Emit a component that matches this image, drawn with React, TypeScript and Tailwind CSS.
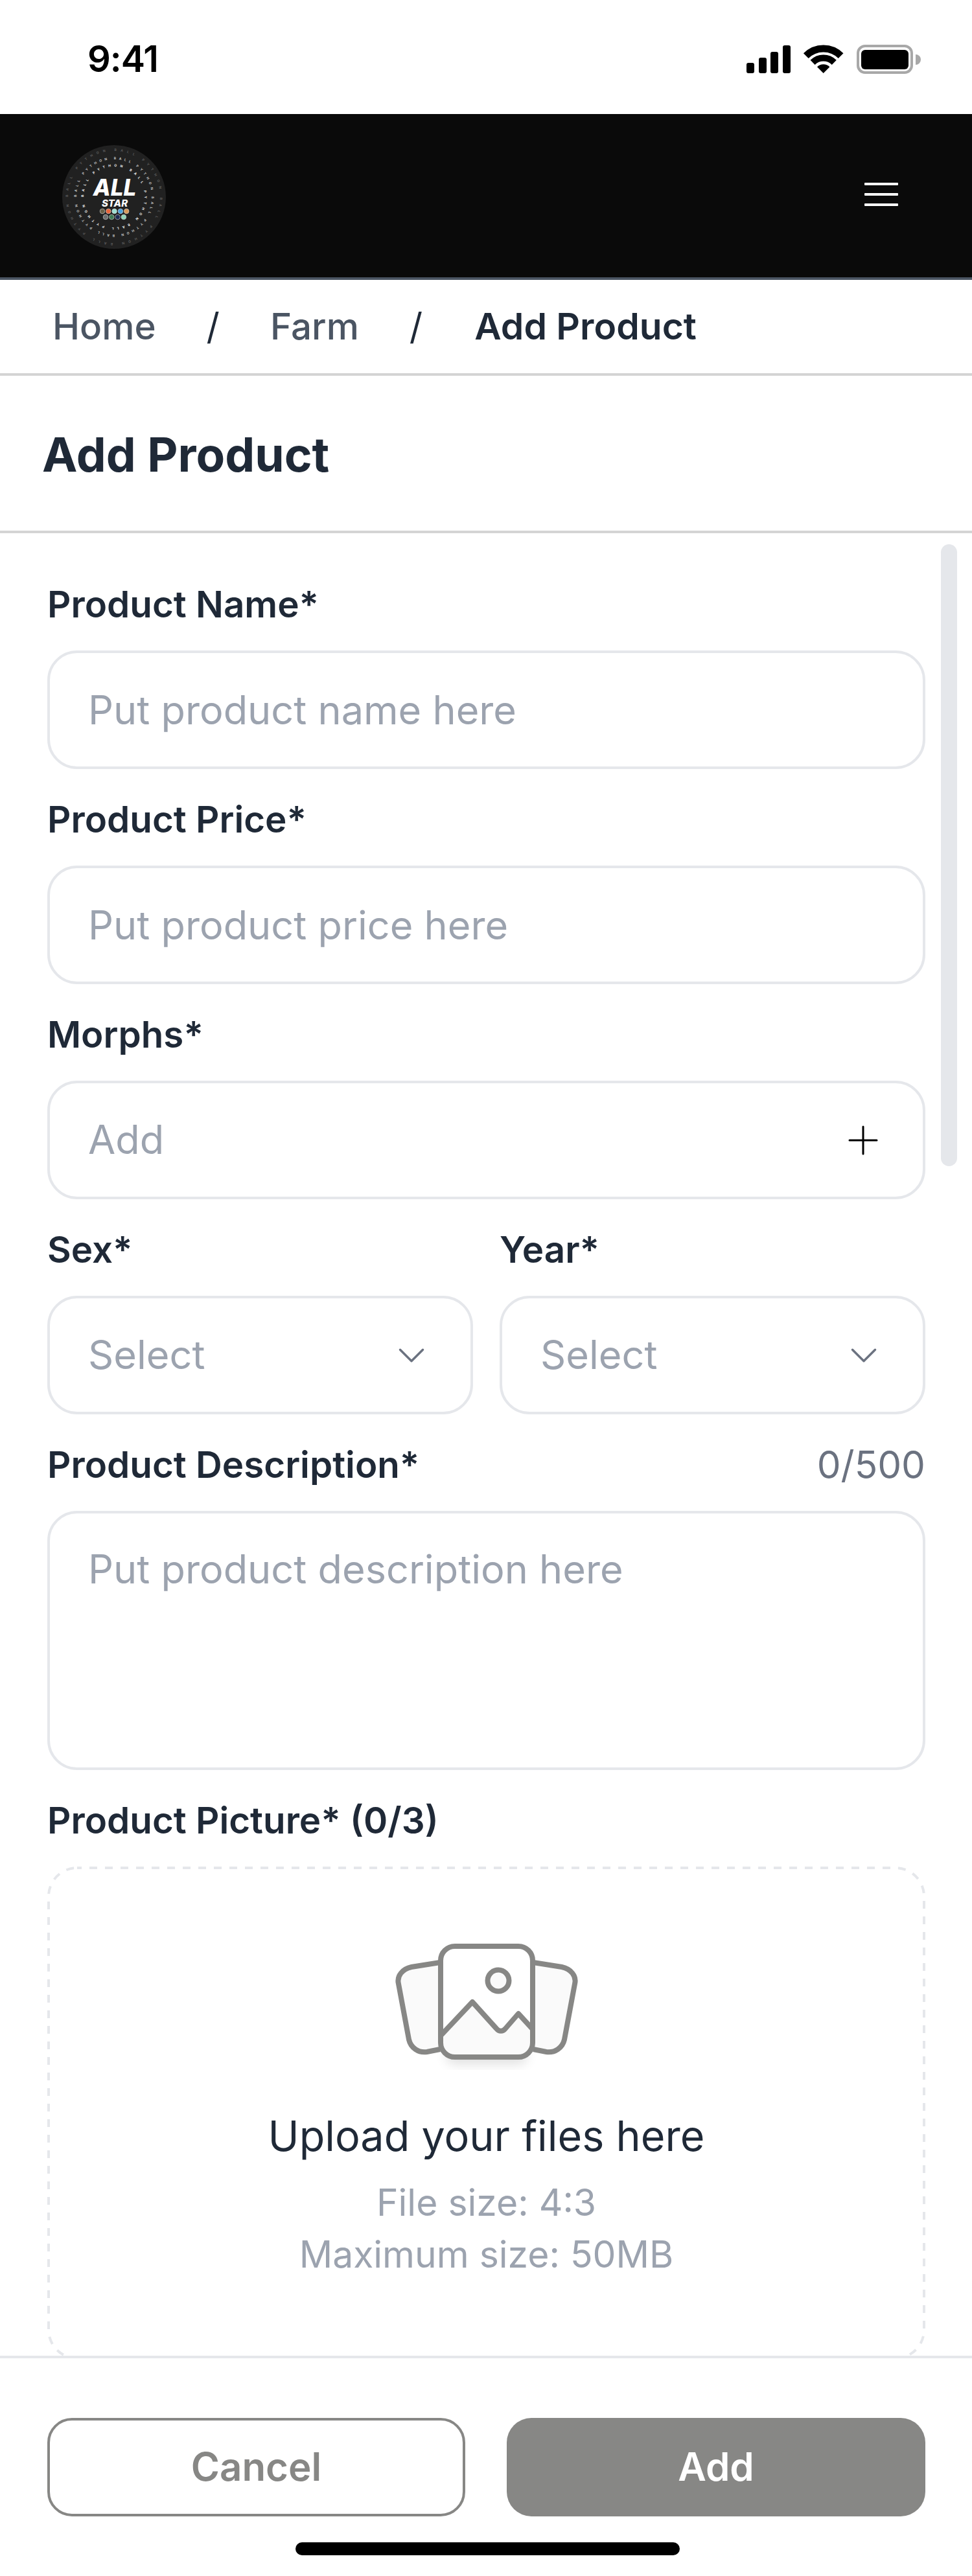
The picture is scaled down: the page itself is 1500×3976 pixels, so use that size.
import { ChevronDown, Plus } from "lucide-react";

const labelClass = "h-[77px] mb-[33px] text-[56.5px] leading-[77px] font-semibold text-[#1f2937] whitespace-nowrap";
const inputClass =
  "block w-full h-[183px] px-[59px] border-4 border-[#e5e7eb] rounded-[46px] bg-white text-[61.2px] outline-none placeholder:text-[#9ca3af]";
const boxClass =
  "flex items-center justify-between h-[183px] pl-[59px] pr-[56px] border-4 border-[#e5e7eb] rounded-[46px] bg-white text-[61.2px] text-[#9ca3af]";

function StatusIcons() {
  return (
    <svg width="340" height="100" viewBox="0 0 340 100" className="mt-1 mr-[60px]">
      <rect x="52" y="57" width="12" height="16" rx="3" fill="#000" />
      <rect x="71" y="49" width="12" height="24" rx="3" fill="#000" />
      <rect x="89" y="40" width="12" height="33" rx="3" fill="#000" />
      <rect x="108" y="30" width="12" height="43" rx="3" fill="#000" />
      <path d="M143.8 46.1A38 38 0 0 1 197.6 46.1" fill="none" stroke="#000" strokeWidth="11" />
      <path d="M154.1 56.4A23.5 23.5 0 0 1 187.3 56.4" fill="none" stroke="#000" strokeWidth="10" />
      <path d="M170.7 73L161 63.3A13.7 13.7 0 0 1 180.4 63.3Z" fill="#000" />
      <rect x="224" y="31" width="83" height="41" rx="11" fill="none" stroke="#a8a8a8" strokeWidth="4" />
      <rect x="229" y="37" width="73" height="30" rx="6" fill="#000" />
      <path d="M313 44A8 8 0 0 1 313 60Z" fill="#a8a8a8" />
    </svg>
  );
}

function Ring({ id, r, color, size, repeat }: { id: string; r: number; color: string; size: number; repeat: number }) {
  const text = Array(repeat).fill("BALL PYTHON").join("      ");
  return (
    <>
      <path id={id} d={`M${80 - r} 80A${r} ${r} 0 1 1 ${80 + r} 80A${r} ${r} 0 1 1 ${80 - r} 80`} fill="none" />
      <text fontSize={size} fill={color} fontWeight="700" fontFamily="Inter, sans-serif">
        <textPath href={`#${id}`} textLength={2 * Math.PI * r - 12}>
          {text}
        </textPath>
      </text>
    </>
  );
}

function Logo() {
  const dotsTop = ["#6b6148", "#e8663c", "#9fe0d4", "#4aa3df", "#d99a5b"];
  const dotsBottom = ["#6d6d6d", "#3f7a55", "#1c2a52", "#8fd3b8"];
  return (
    <svg width="160" height="160" viewBox="0 0 160 160" className="mt-1">
      <circle cx="80" cy="80" r="80" fill="#212121" />
      <Ring id="ring-outer" r={71} color="#5c5c5c" size={5} repeat={4} />
      <Ring id="ring-mid" r={58} color="#c4c4c4" size={5} repeat={4} />
      <Ring id="ring-inner" r={47} color="#f2f2f2" size={5} repeat={3} />
      <text x="81" y="78" textAnchor="middle" fontSize="35" fontWeight="800" fontStyle="italic" fill="#fff" fontFamily="Inter, sans-serif">
        ALL
      </text>
      <text x="81" y="95" textAnchor="middle" fontSize="15" fontWeight="800" fontStyle="italic" fill="#fff" fontFamily="Inter, sans-serif">
        STAR
      </text>
      {dotsTop.map((c, i) => (
        <circle key={c} cx={62 + i * 9.3} cy="102" r="3.8" fill={c} stroke="#ddd" strokeWidth="0.6" />
      ))}
      {dotsBottom.map((c, i) => (
        <circle key={c} cx={67 + i * 9.3} cy="111" r="3.8" fill={c} stroke="#ddd" strokeWidth="0.6" />
      ))}
    </svg>
  );
}

function UploadIcon() {
  return (
    <svg width="380" height="250" viewBox="0 0 380 250" className="mx-auto">
      <defs>
        <filter id="soft" x="-30%" y="-30%" width="160%" height="160%">
          <feGaussianBlur stdDeviation="9" />
        </filter>
      </defs>
      <path
        d="M118 69L74 76C60 79 51 90 54 102L70 188C73 201 85 209 98 207L118 203"
        fill="#fafafa"
        stroke="#878785"
        strokeWidth="8"
      />
      <path
        d="M262 69L306 76C320 79 329 90 326 102L310 188C307 201 295 209 282 207L262 203"
        fill="#fafafa"
        stroke="#878785"
        strokeWidth="8"
      />
      <rect x="128" y="196" width="124" height="30" rx="12" fill="#000" opacity="0.12" filter="url(#soft)" />
      <rect x="119" y="44" width="142" height="171" rx="22" fill="#fff" />
      <path d="M119 182L168 130L205 171C209 176 215 176 219 171L239 148L261 172V193A22 22 0 0 1 239 215H141A22 22 0 0 1 119 193Z" fill="#fafafa" />
      <path d="M119 182L168 130L205 171C209 176 215 176 219 171L239 148L261 172" fill="none" stroke="#878785" strokeWidth="8" strokeLinejoin="round" />
      <circle cx="208" cy="97" r="16.5" fill="#fafafa" stroke="#878785" strokeWidth="8" />
      <rect x="119" y="44" width="142" height="171" rx="22" fill="none" stroke="#878785" strokeWidth="8" />
    </svg>
  );
}

export default function App() {
  return (
    <div className="flex flex-col w-full h-[3976px] overflow-hidden bg-white font-['Inter',sans-serif]">
      <div className="flex items-center justify-between h-[176px] pl-[135px]">
        <span className="mt-[5px] text-[56px] font-semibold tracking-[-1px] text-black">9:41</span>
        <StatusIcons />
      </div>

      <header className="flex items-center justify-between h-[256px] pl-[96px] pr-[114px] bg-[#0a0a0a] border-b-4 border-[#4b5563]">
        <Logo />
        <svg width="52" height="40" viewBox="0 0 52 40">
          <rect x="0" y="0" width="52" height="4" rx="1" fill="#fff" />
          <rect x="0" y="16" width="52" height="4" rx="1" fill="#fff" />
          <rect x="0" y="32" width="52" height="4" rx="1" fill="#fff" />
        </svg>
      </header>

      <nav className="flex items-center h-[148px] pl-[81px] border-b-4 border-[#d4d4d4] text-[56.5px] font-medium text-[#4b5563]">
        <span>Home</span>
        <span className="ml-[78px] text-[#1f2937] font-normal">/</span>
        <span className="ml-[78px]">Farm</span>
        <span className="ml-[78px] text-[#1f2937] font-normal">/</span>
        <span className="ml-[80px] text-[57px] font-semibold text-[#1f2937]">Add Product</span>
      </nav>

      <div className="flex items-center h-[243px] pl-[65px] border-b-4 border-[#d4d4d4]">
        <h1 className="mt-[5px] text-[73px] font-bold text-[#1f2937]">Add Product</h1>
      </div>

      <main className="relative flex-1 min-h-0 overflow-hidden pt-[71px] pl-[73px] pr-[72px]">
        <div className="absolute top-[17px] right-[23px] w-[25px] h-[960px] rounded-full bg-[#e5e7eb]" />

        <div className={labelClass}>Product Name*</div>
        <input className={inputClass} placeholder="Put product name here" />

        <div className={`${labelClass} mt-[39px]`}>Product Price*</div>
        <input className={inputClass} placeholder="Put product price here" />

        <div className={`${labelClass} mt-[39px]`}>Morphs*</div>
        <div className={boxClass}>
          <span>Add</span>
          <Plus size={72} strokeWidth={1} color="#000" />
        </div>

        <div className="grid grid-cols-2 gap-x-[41px] mt-[39px]">
          <div>
            <div className={labelClass}>Sex*</div>
            <div className={boxClass}>
              <span>Select</span>
              <ChevronDown size={70} strokeWidth={1.2} color="#6b7280" />
            </div>
          </div>
          <div>
            <div className={labelClass}>Year*</div>
            <div className={boxClass}>
              <span>Select</span>
              <ChevronDown size={70} strokeWidth={1.2} color="#6b7280" />
            </div>
          </div>
        </div>

        <div className="flex justify-between mt-[39px]">
          <div className={labelClass}>Product Description*</div>
          <span className="text-[58.5px] leading-[77px] text-[#6b7280]">0/500</span>
        </div>
        <textarea
          className="block w-full h-[400px] pt-[41px] px-[59px] border-4 border-[#e5e7eb] rounded-[46px] text-[61.2px] outline-none resize-none placeholder:text-[#9ca3af]"
          placeholder="Put product description here"
        />

        <div className={`${labelClass} mt-[39px]`}>Product Picture* (0/3)</div>
        <div className="relative h-[761px] pt-[79px] text-center">
          <svg width="1355" height="761" viewBox="0 0 1355 761" className="absolute inset-0" fill="none">
            <rect x="2" y="2" width="1351" height="757" rx="44" stroke="#e5e7eb" strokeWidth="4" strokeDasharray="12 12" strokeDashoffset="5" />
          </svg>
          <UploadIcon />
          <p className="mt-[37px] text-[64.7px] leading-[100px] text-[#1f2937]">Upload your files here</p>
          <p className="mt-[13px] text-[57px] leading-[80px] text-[#9ca3af]">File size: 4:3</p>
          <p className="text-[57px] leading-[80px] text-[#9ca3af]">Maximum size: 50MB</p>
        </div>
      </main>

      <footer className="h-[340px] pt-[92px] border-t-4 border-[#e5e7eb]">
        <div className="flex justify-between pl-[73px] pr-[72px]">
          <button className="w-[645px] h-[152px] pb-[2px] border-4 border-[#878785] rounded-[38px] text-[60px] font-semibold text-[#878785]">
            Cancel
          </button>
          <button className="w-[646px] h-[152px] pb-[2px] rounded-[38px] bg-[#878785] text-[60px] font-semibold text-white">
            Add
          </button>
        </div>
        <div className="w-[593px] h-[20px] mt-[40px] ml-[456px] rounded-full bg-black" />
      </footer>
    </div>
  );
}
